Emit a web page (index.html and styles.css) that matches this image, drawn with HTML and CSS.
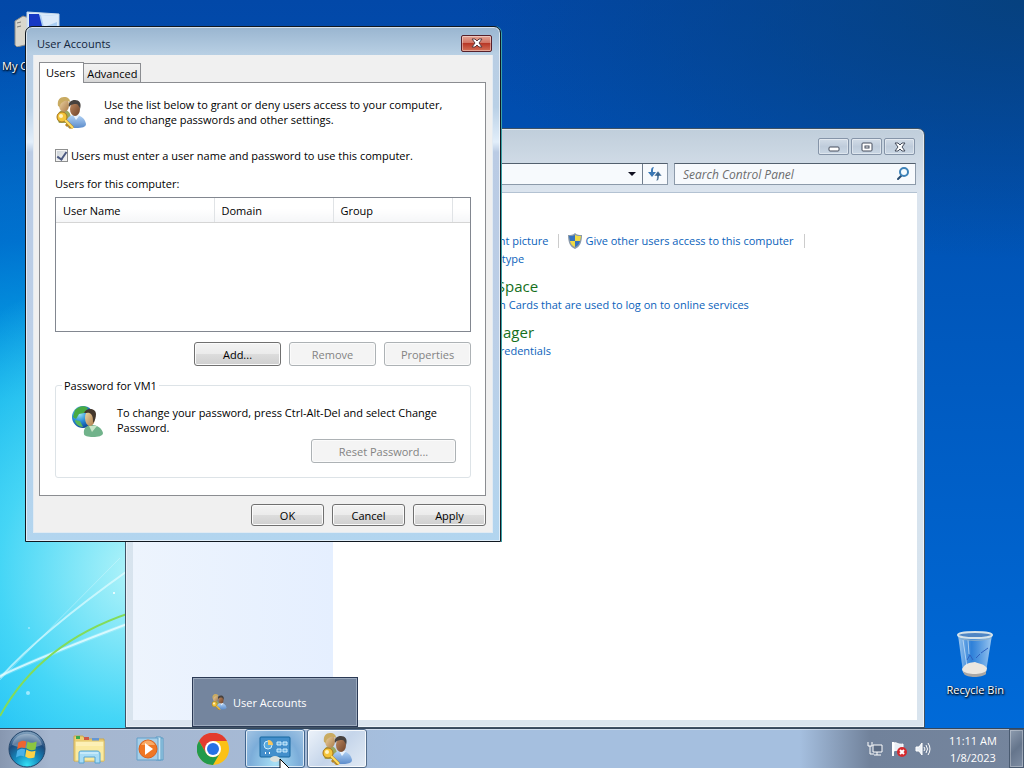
FILE: index.html
```html
<!DOCTYPE html>
<html lang="en">
<head>
    <meta charset="UTF-8">
    <meta name="viewport" content="width=device-width, initial-scale=1.0">
    <title>User Accounts</title>
    <link rel="stylesheet" href="styles.css">
</head>
<body>
    <!-- Shared icons -->
    <svg class="defs" aria-hidden="true">
        <defs>
            <linearGradient id="skinA" x1="0" y1="0" x2="1" y2="1">
                <stop offset="0" stop-color="#f3dcae"/>
                <stop offset="1" stop-color="#a87845"/>
            </linearGradient>
            <linearGradient id="skinB" x1="0" y1="0" x2="1" y2="1">
                <stop offset="0" stop-color="#c08a60"/>
                <stop offset="1" stop-color="#6e432a"/>
            </linearGradient>
            <linearGradient id="shirt" x1="0" y1="0" x2="0" y2="1">
                <stop offset="0" stop-color="#b4d4f6"/>
                <stop offset="1" stop-color="#5c8ccb"/>
            </linearGradient>
            <radialGradient id="globe" cx=".35" cy=".35" r=".7">
                <stop offset="0" stop-color="#9fe4f4"/>
                <stop offset=".5" stop-color="#2a8fd8"/>
                <stop offset="1" stop-color="#0b3f92"/>
            </radialGradient>
            <radialGradient id="orb" cx=".5" cy=".95" r=".9">
                <stop offset="0" stop-color="#35e0f5"/>
                <stop offset=".4" stop-color="#1489bd"/>
                <stop offset=".75" stop-color="#1d4a7c"/>
                <stop offset="1" stop-color="#7b9cba"/>
            </radialGradient>
            <linearGradient id="glass" x1="0" y1="0" x2="1" y2="0">
                <stop offset="0" stop-color="#b8d8f4" stop-opacity=".85"/>
                <stop offset=".4" stop-color="#4d92dd" stop-opacity=".6"/>
                <stop offset="1" stop-color="#c4e0f8" stop-opacity=".8"/>
            </linearGradient>
        </defs>
        <symbol id="people" viewBox="0 0 32 32">
            <path d="M2 22c0-6 3-9 7-9s7 3 7 9l-4 4H4z" fill="#9aa860"/>
            <ellipse cx="9" cy="8" rx="5" ry="7" fill="url(#skinA)"/>
            <path d="M3 9C2 3 5 0 9 0c4 0 6 2 6 5-3-1-5-2-7 0-2 1-3 2-3 5z" fill="#c9ab62"/>
            <path d="M11 27c0-6 4-9 9-9 5 0 10 3 11 9 0 3-4 4-10 4s-10-1-10-4z" fill="url(#shirt)"/>
            <path d="M18 18l3 5 4-5z" fill="#e8f2fc"/>
            <ellipse cx="20" cy="12" rx="5" ry="7" fill="url(#skinB)"/>
            <path d="M14 10c-1-5 2-7 6-7s7 3 5 9c-1-3-2-5-4-5s-5 0-7 3z" fill="#47413e"/>
            <circle cx="7" cy="20" r="5" fill="#f4c53a" stroke="#aa751c"/>
            <circle cx="6" cy="19" r="2" fill="#fff4c5"/>
            <path d="M10 23l8 8M13 27l-2 2M16 29l-2 2" stroke="#b9851f" stroke-width="3" fill="none"/>
            <path d="M10 23l8 8" stroke="#ffdf64" stroke-width="2"/>
        </symbol>
        <symbol id="flag" viewBox="0 0 20 20">
            <path d="M2 4c3-2 5-2 7-1L8 9C6 8 4 8 1 10z" fill="#ed6531"/>
            <path d="M10 3c3 2 5 1 8 0l-1 7c-3 1-5 1-8-1z" fill="#8cc640"/>
            <path d="M1 11c3-2 5-2 7-1l-1 6c-2-1-4-1-7 1z" fill="#4ab1e8"/>
            <path d="M9 10c3 2 5 2 8 1l-1 6c-3 1-5 1-8-1z" fill="#fdd247"/>
        </symbol>
    </svg>

    <main class="desktop">
        <svg class="wallpaper-rays" viewBox="0 0 130 200" fill="none" aria-hidden="true">
            <path d="M0 148Q50 125 130 95" stroke="#d8fbff" stroke-width="4" opacity=".25"/>
            <path d="M0 148Q50 125 130 95" stroke="#e8fdff" stroke-width="2" opacity=".8"/>
            <path d="M0 150Q40 105 130 41" stroke="#e8fdff" stroke-width="2" opacity=".65"/>
            <path d="M0 152Q60 90 120 30" stroke="#dffbff" opacity=".4"/>
            <path d="M0 188Q40 115 130 85" stroke="#83dc59" stroke-width="2"/>
            <circle cx="114" cy="65" r="1" fill="#fff"/>
            <circle cx="28" cy="165" r="2" fill="#9eeaff"/>
            <circle cx="29" cy="100" r="1" fill="#9eeaff"/>
        </svg>

        <a class="shortcut shortcut-computer" href="#">
            <svg width="46" height="36" viewBox="0 0 46 36">
                <path d="M1 10l8-5 6 2v26l-12 3-2-2z" fill="#d9d7cd" stroke="#8d8c88"/>
                <path d="M3 12l4-1M3 16l4-1" stroke="#7c7c78"/>
                <path d="M13 1l32 2v26H13z" fill="#dcecfa" stroke="#c6d8ea"/>
                <path d="M15 3l28 2v22H15z" fill="#a9cdf3"/>
                <path d="M15 3h10l6 24H15z" fill="#1638c4"/>
                <path d="M27 4l16 1v6L30 16z" fill="#dbeafa"/>
            </svg>
            <span>My Computer</span>
        </a>

        <a class="shortcut shortcut-bin" href="#">
            <svg width="40" height="48" viewBox="0 0 40 48">
                <path d="M3 5l5 37c1 4 22 4 23 0l6-37z" fill="url(#glass)"/>
                <path d="M7 39c4-7 9-6 13-7 5 2 9 2 12 6-1 6-3 7-12 7S8 44 7 39z" fill="#ece7e0"/>
                <path d="M8 41c4 4 19 4 23 0v3c-4 4-19 4-22 0z" fill="#aaa7a4"/>
                <path d="M12 30l3-5 3 5M21 28l4-4M26 23l7-5" stroke="#2f62c0" fill="none"/>
                <path d="M8 10l4 27M13 10l1 14" stroke="#e6f4ff" opacity=".6"/>
                <ellipse cx="20" cy="5" rx="17" ry="3" fill="#4f86c4" stroke="#d5e3ea" stroke-width="2"/>
                <path d="M4 8c6 3 26 3 32 0" stroke="#8fb0c8" fill="none"/>
            </svg>
            <span>Recycle Bin</span>
        </a>

        <section class="window explorer" aria-label="Control Panel">
            <header class="explorer-title">
                <button class="caption-btn" aria-label="Minimize">
                    <svg width="12" height="12" viewBox="0 0 12 12"><rect x="1" y="6" width="10" height="4" rx="1" fill="#fff" stroke="#454d5c"/></svg>
                </button>
                <button class="caption-btn" aria-label="Maximize">
                    <svg width="12" height="12" viewBox="0 0 12 12"><rect x="1" y="2" width="10" height="8" rx="1" fill="#fff" stroke="#454d5c"/><rect x="4" y="5" width="4" height="2" fill="#fff" stroke="#454d5c"/></svg>
                </button>
                <button class="caption-btn" aria-label="Close">
                    <svg width="12" height="12" viewBox="0 0 12 12"><path d="M1 2h3l2 2 2-2h3L8 6l3 4H8L6 8l-2 2H1l3-4z" fill="#fff" stroke="#454d5c"/></svg>
                </button>
            </header>
            <div class="explorer-nav">
                <div class="address">
                    <button class="address-drop" aria-label="Previous locations">
                        <svg width="8" height="4" viewBox="0 0 8 4"><path d="M0 0h8L4 4z" fill="#101020"/></svg>
                    </button>
                    <button class="address-refresh" aria-label="Refresh">
                        <svg width="16" height="16" viewBox="0 0 16 16"><path d="M7 1C4 1 4 4 4 6H1l4 5 4-5H6c0-3 0-3 1-5z" fill="#3a78b5"/><path d="M9 15c3 0 3-3 3-5h3l-4-5-4 5h3c0 3 0 3-1 5z" fill="#39658f" stroke="#fff" stroke-width=".5"/></svg>
                    </button>
                </div>
                <div class="search">
                    <input type="search" placeholder="Search Control Panel" aria-label="Search Control Panel">
                    <svg width="14" height="14" viewBox="0 0 14 14" fill="none"><path d="M6 8l-4 4" stroke="#274a70" stroke-width="2" stroke-linecap="round"/><circle cx="8" cy="5" r="4" fill="#f4fbff" stroke="#3d82b8" stroke-width="2"/></svg>
                </div>
            </div>
            <div class="explorer-body">
                <aside class="explorer-side"></aside>
                <div class="explorer-main">
                    <section class="category">
                        <h2>User Accounts</h2>
                        <div class="tasks">
                            <a href="#">Change your account picture</a>
                            <a href="#" class="shielded">
                                <svg width="14" height="16" viewBox="0 0 14 16"><path d="M7 0c2 2 4 2 7 2 0 7-2 12-7 14C2 14 0 9 0 2c3 0 5 0 7-2z" fill="#8b9aa9"/><path d="M7 2v6H2L1 3c3 0 4 0 6-1z" fill="#3472bf"/><path d="M7 2c2 1 3 1 6 1l-1 5H7z" fill="#efda45"/><path d="M2 8h5v6c-3-1-4-3-5-6z" fill="#efda45"/><path d="M7 8h5c-1 3-2 5-5 6z" fill="#3472bf"/></svg>
                                Give other users access to this computer
                            </a>
                        </div>
                        <a href="#">Change an account type</a>
                    </section>
                    <section class="category">
                        <h2>Windows CardSpace</h2>
                        <a href="#">Manage Information Cards that are used to log on to online services</a>
                    </section>
                    <section class="category">
                        <h2>Credential Manager</h2>
                        <a href="#">Manage Windows credentials</a>
                    </section>
                </div>
            </div>
        </section>

        <section class="window dialog" role="dialog" aria-labelledby="dialogTitle">
            <header class="dialog-title">
                <h1 id="dialogTitle">User Accounts</h1>
                <button class="close-btn" aria-label="Close">
                    <svg width="12" height="10" viewBox="0 0 12 10"><path d="M1 1h3l2 2 2-2h3L8 5l3 4H8L6 7 4 9H1l3-4z" fill="#fff" stroke="#5c3c40"/></svg>
                </button>
            </header>
            <div class="dialog-client">
                <div class="tabs" role="tablist">
                    <button class="tab active" role="tab" aria-selected="true">Users</button>
                    <button class="tab" role="tab" aria-selected="false">Advanced</button>
                </div>
                <div class="tab-panel" role="tabpanel">
                    <div class="intro">
                        <svg width="32" height="32"><use href="#people"/></svg>
                        <p>Use the list below to grant or deny users access to your computer,<br>and to change passwords and other settings.</p>
                    </div>
                    <div class="require">
                        <input type="checkbox" id="requirePassword" checked>
                        <label for="requirePassword">Users must enter a user name and password to use this computer.</label>
                    </div>
                    <p class="list-label" id="listLabel">Users for this computer:</p>
                    <div class="list">
                        <table aria-labelledby="listLabel">
                            <thead>
                                <tr>
                                    <th class="col-name">User Name</th>
                                    <th class="col-domain">Domain</th>
                                    <th class="col-domain">Group</th>
                                    <td></td>
                                </tr>
                            </thead>
                        </table>
                    </div>
                    <div class="actions">
                        <button class="btn btn-add">Add...</button>
                        <button class="btn" disabled>Remove</button>
                        <button class="btn" disabled>Properties</button>
                    </div>
                    <fieldset class="password">
                        <legend>Password for VM1</legend>
                        <div class="password-info">
                            <svg width="32" height="32" viewBox="0 0 32 32">
                                <circle cx="11" cy="12" r="11" fill="url(#globe)"/>
                                <path d="M3 5c4-4 9-5 13-2l-4 5-5 1-3 5-3-2z" fill="#48aa43"/>
                                <path d="M3 15l5 1 3 6c-4 0-8-3-8-7z" fill="#59b75b"/>
                                <path d="M12 29c-1-6 3-9 8-9s10 3 11 8c0 3-5 4-10 4s-9-1-9-3z" fill="#71b38b"/>
                                <path d="M17 21l3 6 5-6z" fill="#c8e6c7"/>
                                <ellipse cx="18" cy="13" rx="5" ry="8" fill="url(#skinA)"/>
                                <path d="M12 8c2-6 12-5 12 1 0 3-1 7-3 9 0-4 0-7-2-9s-4-1-7-1z" fill="#44372c"/>
                            </svg>
                            <p>To change your password, press Ctrl-Alt-Del and select Change Password.</p>
                        </div>
                        <button class="btn btn-reset" disabled>Reset Password...</button>
                    </fieldset>
                </div>
                <footer class="dialog-footer">
                    <button class="btn">OK</button>
                    <button class="btn">Cancel</button>
                    <button class="btn">Apply</button>
                </footer>
            </div>
        </section>
    </main>

    <nav class="taskbar" aria-label="Taskbar">
        <button class="start" aria-label="Start">
            <svg width="38" height="38" viewBox="0 0 38 38">
                <circle cx="19" cy="19" r="18" fill="url(#orb)" stroke="#23466b"/>
                <path d="M4 15C7 0 31 0 34 15c-10 4-20 4-30 0z" fill="#fff" opacity=".3"/>
                <use href="#flag" x="8" y="8" width="23" height="23"/>
            </svg>
        </button>
        <div class="pinned">
            <button class="task" aria-label="Windows Explorer">
                <svg width="34" height="32" viewBox="0 0 34 32">
                    <path d="M2 3h9l2 3h19v22H2z" fill="#efcf70" stroke="#c9a74e"/>
                    <path d="M4 3h4v3H4z" fill="#39aa4c"/><path d="M12 4h5v3h-5z" fill="#cf5844"/><path d="M20 5h7v4h-7z" fill="#6496d4"/>
                    <path d="M3 8h29v20H3z" fill="#faeaa0" stroke="#e2c671"/>
                    <path d="M4 10h27M4 12h27" stroke="#fff6cc"/>
                    <path d="M7 30V20c0-2 1-2 3-2h15c2 0 3 1 3 3v9h-5v-6H12v6z" fill="#a8dcf5" stroke="#54a4d2"/>
                    <path d="M8 20h18" stroke="#e4f7ff"/>
                </svg>
            </button>
            <button class="task" aria-label="Windows Media Player">
                <svg width="30" height="26" viewBox="0 0 30 26">
                    <path d="M22 2h5v22h-5z" fill="#a6d2e8" stroke="#5a9cc5"/>
                    <path d="M20 1h5v23h-5z" fill="#cce8f5" stroke="#5a9cc5"/>
                    <path d="M1 2h21v22H1z" fill="#a7cfe8" stroke="#639fc9"/>
                    <circle cx="12" cy="13" r="9" fill="#ef7724" stroke="#d9601c"/>
                    <path d="M5 9c3-6 11-6 14 0z" fill="#f8aa66"/>
                    <path d="M9 7l8 6-8 6z" fill="#fff"/>
                </svg>
            </button>
            <button class="task" aria-label="Google Chrome">
                <svg width="32" height="32" viewBox="0 0 32 32">
                    <circle cx="16" cy="16" r="16" fill="#fbc116"/>
                    <path d="M16 8h14A16 16 0 0 0 2 8l7 12z" fill="#e33b2e"/>
                    <path d="M2 8a16 16 0 0 0 14 24l7-12a8 8 0 0 1-14 0z" fill="#229a4b"/>
                    <circle cx="16" cy="16" r="8" fill="#fff"/>
                    <circle cx="16" cy="16" r="6" fill="#2671e5"/>
                </svg>
            </button>
            <div class="task-group">
                <button class="task task-hover" aria-label="Control Panel">
                    <svg width="32" height="28" viewBox="0 0 32 28">
                        <rect x="1" y="2" width="30" height="20" rx="1" fill="#438fcb" stroke="#17669f"/>
                        <circle cx="9" cy="10" r="4" fill="#57a9dd" stroke="#cbecff"/>
                        <path d="M9 10V5c3 0 5 2 5 5z" fill="#f5c55f"/>
                        <path d="M18 7h4v3h-4zM24 7h4v3h-4zM18 14h4v3h-4zM24 14h4v3h-4z" fill="#6bb2e0" stroke="#d0edff"/>
                        <path d="M6 18h1M10 18h1" stroke="#fff" stroke-width="2"/>
                        <ellipse cx="16" cy="24" rx="5" ry="3" fill="#dce1dc"/>
                    </svg>
                </button>
                <a class="preview" href="#">
                    <svg width="16" height="16"><use href="#people"/></svg>
                    <span>User Accounts</span>
                </a>
                <svg class="cursor" width="12" height="19" viewBox="0 0 12 19" aria-hidden="true"><path d="M1 1v14l3-3 3 6 2-1-3-6h5z" fill="#fff" stroke="#000"/></svg>
            </div>
            <button class="task task-active" aria-label="User Accounts">
                <svg width="32" height="32"><use href="#people"/></svg>
            </button>
        </div>
        <div class="tray">
            <svg width="16" height="16" viewBox="0 0 16 16" fill="none"><path d="M1 1v4h4V1M3 5v8h4" stroke="#fff"/><path d="M6 4h9v7H6z" fill="#5b6b83" stroke="#fff"/><path d="M10 11v3M7 14h7" stroke="#fff"/></svg>
            <svg width="16" height="16" viewBox="0 0 16 16"><path d="M2 1v14" stroke="#fff" stroke-width="2"/><path d="M3 2c3-1 4 2 9 1v7c-4 1-6-2-9 0z" fill="#e8edf4" stroke="#fff"/><circle cx="11" cy="11" r="5" fill="#d42a2e"/><path d="M9 9l4 4M13 9l-4 4" stroke="#fff" stroke-width="2"/></svg>
            <svg width="16" height="16" viewBox="0 0 16 16" fill="none"><path d="M1 6h3l3-4v12l-3-4H1z" fill="#e9eff6" stroke="#fff"/><path d="M9 6q2 2 0 4M11 4q3 4 0 8M13 2q4 6 0 12" stroke="#fff"/></svg>
        </div>
        <time class="clock" datetime="2023-01-08T11:11">
            <span>11:11 AM</span>
            <span>1/8/2023</span>
        </time>
        <button class="show-desktop" aria-label="Show desktop"></button>
    </nav>
</body>
</html>
```
FILE: styles.css
```css
* {
    margin: 0;
    padding: 0;
    box-sizing: border-box;
}

body {
    display: flex;
    flex-direction: column;
    height: 100vh;
    overflow: hidden;
    font-family: 'Open Sans', 'Noto Sans', sans-serif;
    font-size: 11px;
    line-height: 15px;
    color: #000;
}

button, input {
    font: inherit;
}

svg {
    display: block;
    flex: none;
}

a {
    color: #0a62bb;
    text-decoration: none;
}

.defs {
    position: absolute;
    width: 0;
    height: 0;
}

/* Desktop */
.desktop {
    position: relative;
    flex: 1;
    background:
        radial-gradient(ellipse 280px 300px at 140px 570px, rgba(190, 248, 250, 0.95), rgba(90, 226, 248, 0.75) 50%, rgba(0, 170, 240, 0) 100%),
        radial-gradient(ellipse 600px 680px at 60px 700px, #05b4f5, #06acea 45%, rgba(0, 130, 220, 0.65) 68%, rgba(0, 90, 200, 0) 100%),
        radial-gradient(ellipse 560px 260px at 100% 0, #06417f, rgba(4, 70, 150, 0) 100%),
        linear-gradient(#0248a8, #0055b8 35%, #006ad8);
}

.wallpaper-rays {
    position: absolute;
    left: 0;
    bottom: 0;
    width: 130px;
    height: 200px;
}

.shortcut {
    position: absolute;
    display: flex;
    flex-direction: column;
    align-items: center;
    color: #fff;
    text-shadow: 0 1px 2px #000, 1px 1px 2px #000;
    white-space: nowrap;
}

.shortcut-computer {
    top: 11px;
    left: 2px;
    gap: 11px;
}

.shortcut-bin {
    right: 20px;
    bottom: 31px;
    gap: 4px;
}

/* Windows */
.window {
    position: absolute;
    border: 1px solid #101820;
    border-radius: 7px 7px 0 0;
}

.explorer {
    top: 128px;
    left: 125px;
    right: 99px;
    bottom: 0;
    display: flex;
    flex-direction: column;
    padding: 0 7px 7px;
    border-color: #3f5265;
    background: linear-gradient(#c0cedb, #dbe4ee 60px, #d6e3ee 300px, #d9e4ee);
    box-shadow: inset 0 0 0 1px rgba(255, 255, 255, 0.5);
}

.explorer-title {
    display: flex;
    justify-content: flex-end;
    gap: 2px;
    padding: 9px 2px 8px;
}

.caption-btn {
    display: grid;
    place-items: center;
    width: 31px;
    height: 17px;
    border: 1px solid #8594a8;
    border-radius: 2px;
    background: linear-gradient(#d2dce7, #bfccdb 50%, #cad7e4);
    box-shadow: inset 0 0 0 1px rgba(255, 255, 255, 0.4);
}

.explorer-nav {
    display: flex;
    gap: 6px;
    padding: 0 1px 7px;
    border-bottom: 1px solid #b3c2d2;
}

.address,
.search {
    display: flex;
    align-items: center;
    height: 22px;
    border: 1px solid #8c9aaa;
    border-top-color: #53606e;
    background: #f7fafd;
}

.address {
    flex: 1;
    justify-content: flex-end;
}

.address button {
    display: grid;
    place-items: center;
    height: 20px;
    border: none;
    background: none;
}

.address .address-drop {
    width: 20px;
}

.address .address-refresh {
    width: 25px;
    border-left: 1px solid #6f7d8d;
}

.search {
    width: 242px;
    padding-right: 5px;
}

.search input {
    flex: 1;
    min-width: 0;
    padding-left: 8px;
    border: none;
    outline: none;
    background: none;
    font-size: 12px;
    font-style: italic;
}

.search input::placeholder {
    color: #6d6d6d;
}

.explorer-body {
    flex: 1;
    display: flex;
    min-height: 0;
    background: #fff;
}

.explorer-side {
    width: 200px;
    background: linear-gradient(90deg, #edf4fd, #e5efff);
}

.explorer-main {
    flex: 1;
    padding: 20px 0 0 68px;
    white-space: nowrap;
}

.category {
    margin-bottom: 9px;
    line-height: 18px;
}

.category h2 {
    margin-left: -5px;
    color: #15701c;
    font-size: 15px;
    font-weight: 400;
    line-height: 19px;
}

.tasks {
    display: flex;
}

.tasks a {
    display: flex;
    align-items: center;
    gap: 3px;
    margin-right: 9px;
    padding-right: 11px;
    background: linear-gradient(#ccc, #ccc) right center / 1px 14px no-repeat;
}

/* User Accounts dialog */
.dialog {
    top: 26px;
    left: 25px;
    width: 476px;
    padding: 0 7px 8px;
    background:
        linear-gradient(#99b5d0, #b9d0e4 28px, rgba(185, 208, 228, 0) 28px),
        linear-gradient(#b8cce2, #b9d0e6 80px, #e2eefa 115px, #bacbe4 125px, #bccfe7 60%, #b2d5ef);
    box-shadow: inset 0 0 0 1px rgba(255, 255, 255, 0.6), 1px 0 0 #3ba1a8;
}

.dialog-title {
    display: flex;
    align-items: center;
    justify-content: space-between;
    height: 28px;
    padding: 4px 1px 0 4px;
}

.dialog-title h1 {
    color: #13253c;
    font-size: 11px;
    font-weight: 400;
}

.close-btn {
    display: grid;
    place-items: center;
    width: 31px;
    height: 17px;
    border: 1px solid #56202a;
    border-radius: 2px;
    background: linear-gradient(#e5a494, #d17565 45%, #b83827 50%, #d57057);
    box-shadow: inset 0 0 0 1px rgba(255, 255, 255, 0.4);
}

.dialog-client {
    padding: 7px 6px 6px 5px;
    border: 1px solid #e2ebf3;
    border-top: none;
    background: #f0f0f0;
}

.tabs {
    display: flex;
    align-items: flex-end;
}

.tab {
    height: 19px;
    padding: 0 3px;
    border: 1px solid #8b8d91;
    border-left: none;
    border-bottom: none;
    background: linear-gradient(#f2f2f2, #ebebeb 50%, #d6d6d6);
}

.tab.active {
    height: 21px;
    margin-bottom: -1px;
    padding: 0 8px 2px 6px;
    border-left: 1px solid #8b8d91;
    background: #fff;
    z-index: 1;
}

.tab-panel {
    padding: 14px 14px 17px 15px;
    border: 1px solid #8b8d91;
    background: #fff;
}

.intro {
    display: flex;
    gap: 17px;
}

.require {
    display: flex;
    align-items: center;
    gap: 3px;
    margin-top: 19px;
}

.require input {
    display: grid;
    place-items: center;
    appearance: none;
    width: 13px;
    height: 13px;
    border: 1px solid #8e8f8f;
    background: linear-gradient(135deg, #c9d0d6, #f6f6f6);
    box-shadow: inset 0 0 0 1px #f4f4f4;
}

.require input:checked::before {
    content: '';
    width: 4px;
    height: 8px;
    margin-bottom: 2px;
    border: solid #4a5880;
    border-width: 0 2px 2px 0;
    transform: rotate(35deg);
}

.list-label {
    margin: 13px 0 6px;
}

.list {
    height: 135px;
    border: 1px solid #828790;
    background: #fff;
}

.list table {
    width: 100%;
    border-collapse: collapse;
    table-layout: fixed;
}

.list th,
.list td {
    height: 24px;
    padding: 2px 0 0 7px;
    border-right: 1px solid #e0e3e6;
    border-bottom: 1px solid #d5d5d5;
    background: linear-gradient(#fff, #fff 45%, #f5f6f8);
    font-weight: 400;
    text-align: left;
}

.list td {
    border-right: none;
}

.col-name {
    width: 158px;
}

.col-domain {
    width: 119px;
}

.btn {
    height: 22px;
    border: 1px solid #707070;
    border-radius: 3px;
    background: linear-gradient(#f3f3f3, #ebebeb 50%, #dddddd 50%, #cfcfcf);
    box-shadow: inset 0 0 0 1px #fbfbfb;
}

.btn:disabled {
    border-color: #adb2b5;
    background: #f4f4f4;
    color: #838383;
}

.actions {
    display: flex;
    justify-content: flex-end;
    gap: 8px;
    margin: 10px 0 12px;
}

.actions .btn {
    width: 87px;
    height: 24px;
}

.password {
    display: flex;
    flex-direction: column;
    padding: 12px 14px 14px 16px;
    border: 1px solid #dde3e7;
    border-radius: 3px;
}

.password legend {
    margin-left: -10px;
    padding: 0 2px;
}

.password-info {
    display: flex;
    gap: 13px;
}

.password .btn-reset {
    align-self: flex-end;
    width: 145px;
    height: 24px;
    margin-top: 2px;
}

.dialog-footer {
    display: flex;
    justify-content: flex-end;
    gap: 8px;
    padding-top: 8px;
}

.dialog-footer .btn {
    width: 73px;
}

/* Taskbar */
.taskbar {
    position: relative;
    display: flex;
    align-items: stretch;
    height: 40px;
    border-top: 1px solid #35475c;
    background: linear-gradient(90deg, #8797b0, #a5b6cf 50px, #a6bad6 300px, #a5bfdf 400px, #a5bfdf 800px, #71829b 870px, #75859d);
    box-shadow: inset 0 1px 0 rgba(255, 255, 255, 0.45);
}

.taskbar button {
    display: grid;
    place-items: center;
    border: 1px solid transparent;
    background: none;
}

.taskbar .start {
    width: 54px;
}

.pinned {
    display: flex;
    gap: 2px;
    padding-left: 5px;
}

.taskbar .task {
    width: 60px;
    height: 39px;
}

.taskbar .task-hover {
    border-color: #40658e;
    border-radius: 3px;
    background: radial-gradient(ellipse at 50% 90%, #a8e0f6, #7cadd9 60%, #a6c6e4);
    box-shadow: inset 0 0 0 1px rgba(255, 255, 255, 0.7);
}

.taskbar .task-active {
    border-color: #536c8a;
    border-radius: 3px;
    background: linear-gradient(135deg, #edf3fa, #c5d5ea 50%, #e2ebf5);
    box-shadow: inset 0 0 0 1px rgba(255, 255, 255, 0.8);
}

.task-group {
    position: relative;
}

.preview {
    position: absolute;
    left: -53px;
    bottom: 41px;
    display: flex;
    align-items: center;
    gap: 6px;
    width: 166px;
    height: 50px;
    padding-left: 18px;
    border: 1px solid #2b3a55;
    background: #74859e;
    box-shadow: inset 0 0 0 1px #9caabd;
    color: #fff;
    white-space: nowrap;
}

.cursor {
    position: absolute;
    left: 34px;
    top: 29px;
}

.tray {
    display: flex;
    align-items: center;
    gap: 8px;
    margin: 0 6px 0 auto;
}

.clock {
    display: flex;
    flex-direction: column;
    align-items: center;
    justify-content: center;
    width: 72px;
    line-height: 17px;
    color: #fff;
}

.taskbar .show-desktop {
    width: 15px;
    border-color: #495a70;
    background: linear-gradient(135deg, #8e9caf, #65758c 50%, #7e8da3);
    box-shadow: inset 0 0 0 1px rgba(255, 255, 255, 0.3);
}
```
